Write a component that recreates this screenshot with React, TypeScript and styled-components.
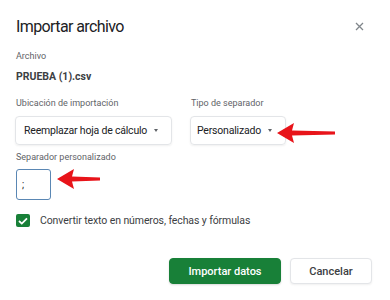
import React from "react";
import styled, { createGlobalStyle } from "styled-components";

const GlobalStyle = createGlobalStyle`
  body {
    margin: 0;
    background: #ffffff;
    font-family: Roboto, "Liberation Sans", Arial, sans-serif;
    color: #202124;
  }
`;

const Dialog = styled.div`
  position: relative;
  width: 390px;
  height: 300px;
  box-sizing: border-box;
  padding: 17px 18px 0 16px;
  display: flex;
  flex-direction: column;
  overflow: hidden;
`;

const Header = styled.div`
  display: flex;
  align-items: center;
  justify-content: space-between;
  height: 20px;
`;

const Title = styled.h1`
  margin: 0;
  font-size: 16px;
  letter-spacing: -0.6px;
  line-height: 20px;
  font-weight: 400;
  color: #202124;
`;

const CloseButton = styled.button`
  border: 0;
  background: none;
  padding: 0;
  width: 14px;
  height: 14px;
  margin-right: 6px;
  margin-top: -2px;
  display: flex;
  align-items: center;
  justify-content: center;
  cursor: pointer;
`;

const Label = styled.div<{ $top: number }>`
  margin-top: ${({ $top }) => $top}px;
  font-size: 9px;
  line-height: 12px;
  color: #5f6368;
`;

const FileName = styled.div`
  margin-top: 8px;
  font-size: 10.5px;
  line-height: 14px;
  font-weight: 700;
  color: #3c4043;
`;

const Row = styled.div`
  display: flex;
  gap: 18px;
  margin-top: 13px;
  margin-left: -1px;
`;

const Column = styled.div`
  display: flex;
  flex-direction: column;
  padding-left: 1px;
`;

const Select = styled.div<{ $width: number; $pad: number }>`
  margin-top: 7px;
  margin-left: -1px;
  width: ${({ $width }) => $width}px;
  height: 29px;
  box-sizing: border-box;
  border: 1px solid #e3e5e8;
  border-radius: 4px;
  box-shadow: 0 1px 2px rgba(60, 64, 67, 0.08);
  display: flex;
  align-items: center;
  gap: 7px;
  padding-left: ${({ $pad }) => $pad}px;
  font-size: 10.5px;
  letter-spacing: -0.2px;
  color: #202124;
`;

const Caret = styled.span`
  width: 0;
  height: 0;
  border-left: 2.5px solid transparent;
  border-right: 2.5px solid transparent;
  border-top: 3px solid #5f6368;
`;

const SeparatorInput = styled.div`
  margin-top: 6px;
  width: 35px;
  height: 31px;
  box-sizing: border-box;
  border: 1.5px solid #5a87b4;
  border-radius: 3px;
  display: flex;
  align-items: center;
  padding-left: 5px;
  font-size: 10px;
  color: #202124;
`;

const CheckRow = styled.label`
  margin-top: 14px;
  display: flex;
  align-items: center;
  gap: 10px;
  font-size: 10.5px;
  letter-spacing: -0.1px;
  color: #3c4043;
`;

const CheckBox = styled.span`
  width: 14px;
  height: 13px;
  border-radius: 2px;
  background: #188038;
  display: flex;
  align-items: center;
  justify-content: center;
`;

const Actions = styled.div`
  margin-top: 31px;
  display: flex;
  justify-content: flex-end;
  gap: 9px;
`;

const Button = styled.button<{ $primary?: boolean; $width: number }>`
  width: ${({ $width }) => $width}px;
  height: 26px;
  border-radius: 4px;
  font-family: Roboto, "Liberation Sans", Arial, sans-serif;
  font-size: 11px;
  font-weight: 500;
  cursor: pointer;
  border: 1px solid ${({ $primary }) => ($primary ? "#188038" : "#e3e5e8")};
  background: ${({ $primary }) => ($primary ? "#188038" : "#ffffff")};
  color: ${({ $primary }) => ($primary ? "#ffffff" : "#3c4043")};
  box-shadow: ${({ $primary }) =>
    $primary ? "0 1px 2px rgba(0,0,0,0.15)" : "0 1px 2px rgba(60,64,67,0.08)"};
`;

// flechas rojas de la captura (anotación encima del diálogo)
const Arrow = styled.svg<{ $x: number; $y: number }>`
  position: absolute;
  left: ${({ $x }) => $x}px;
  top: ${({ $y }) => $y}px;
`;

function RedArrow({ x, y, length }: { x: number; y: number; length: number }) {
  return (
    <Arrow $x={x} $y={y} width={length} height={22} viewBox={`0 0 ${length} 22`}>
      <path d={`M0 11 L17 1 L15 8.5 L${length} 9.5 L${length} 12.5 L15 13.5 L17 21 Z`} fill="#e8141a" />
    </Arrow>
  );
}

export default function App() {
  return (
    <>
      <GlobalStyle />
      <Dialog>
        <Header>
          <Title>Importar archivo</Title>
          <CloseButton aria-label="Cerrar">
            <svg width="9" height="9" viewBox="0 0 9 9">
              <path d="M1 1 L8 8 M8 1 L1 8" stroke="#80868b" strokeWidth="1.3" />
            </svg>
          </CloseButton>
        </Header>

        <Label $top={13}>Archivo</Label>
        <FileName>PRUEBA (1).csv</FileName>

        <Row>
          <Column>
            <Label $top={0}>Ubicación de importación</Label>
            <Select $width={157} $pad={8}>
              Reemplazar hoja de cálculo
              <Caret />
            </Select>
          </Column>
          <Column>
            <Label $top={0}>Tipo de separador</Label>
            <Select $width={96} $pad={6}>
              Personalizado
              <Caret />
            </Select>
          </Column>
        </Row>

        <Label $top={6}>Separador personalizado</Label>
        <SeparatorInput>;</SeparatorInput>

        <CheckRow>
          <CheckBox>
            <svg width="10" height="8" viewBox="0 0 10 8">
              <path d="M1 4 L3.8 6.6 L9 1.3" stroke="#ffffff" strokeWidth="1.8" fill="none" />
            </svg>
          </CheckBox>
          Convertir texto en números, fechas y fórmulas
        </CheckRow>

        <Actions>
          <Button $primary $width={112}>Importar datos</Button>
          <Button $width={82}>Cancelar</Button>
        </Actions>

        <RedArrow x={277} y={122} length={58} />
        <RedArrow x={57} y={168} length={43} />
      </Dialog>
    </>
  );
}
